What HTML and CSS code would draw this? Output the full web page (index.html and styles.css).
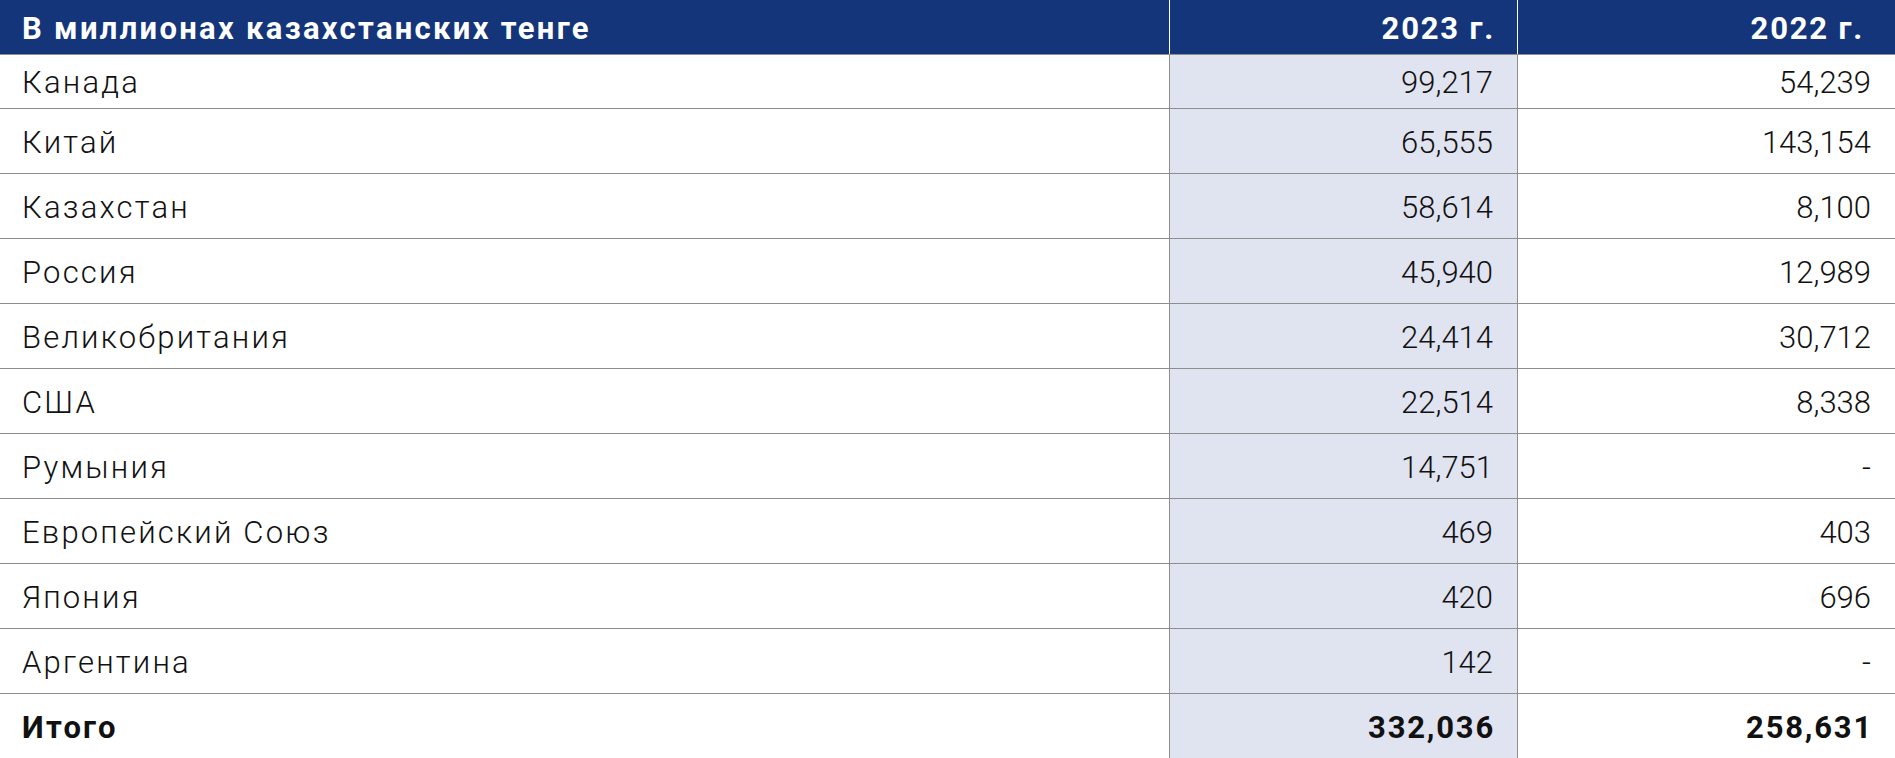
FILE: index.html
```html
<!DOCTYPE html>
<html lang="ru">
<head>
<meta charset="utf-8">
<title>В миллионах казахстанских тенге</title>
<link rel="stylesheet" href="styles.css">
</head>
<body>
<div class="table">
  <div class="row head">
    <div class="cell name">В миллионах казахстанских тенге</div>
    <div class="cell num cur">2023 г.</div>
    <div class="cell num prev">2022 г.</div>
  </div>
  <div class="row first">
    <div class="cell name">Канада</div>
    <div class="cell num cur">99,217</div>
    <div class="cell num prev">54,239</div>
  </div>
  <div class="row">
    <div class="cell name">Китай</div>
    <div class="cell num cur">65,555</div>
    <div class="cell num prev">143,154</div>
  </div>
  <div class="row">
    <div class="cell name">Казахстан</div>
    <div class="cell num cur">58,614</div>
    <div class="cell num prev">8,100</div>
  </div>
  <div class="row">
    <div class="cell name">Россия</div>
    <div class="cell num cur">45,940</div>
    <div class="cell num prev">12,989</div>
  </div>
  <div class="row">
    <div class="cell name">Великобритания</div>
    <div class="cell num cur">24,414</div>
    <div class="cell num prev">30,712</div>
  </div>
  <div class="row">
    <div class="cell name">США</div>
    <div class="cell num cur">22,514</div>
    <div class="cell num prev">8,338</div>
  </div>
  <div class="row">
    <div class="cell name">Румыния</div>
    <div class="cell num cur">14,751</div>
    <div class="cell num prev">-</div>
  </div>
  <div class="row">
    <div class="cell name">Европейский Союз</div>
    <div class="cell num cur">469</div>
    <div class="cell num prev">403</div>
  </div>
  <div class="row">
    <div class="cell name">Япония</div>
    <div class="cell num cur">420</div>
    <div class="cell num prev">696</div>
  </div>
  <div class="row">
    <div class="cell name">Аргентина</div>
    <div class="cell num cur">142</div>
    <div class="cell num prev">-</div>
  </div>
  <div class="row total">
    <div class="cell name">Итого</div>
    <div class="cell num cur">332,036</div>
    <div class="cell num prev">258,631</div>
  </div>
</div>
</body>
</html>
```

FILE: styles.css
```css
html, body {
  margin: 0;
  padding: 0;
  background: #ffffff;
}

body {
  font-family: Roboto, "Liberation Sans", sans-serif;
  color: #111111;
}

.table {
  width: 1895px;
}

.row {
  display: grid;
  grid-template-columns: 1169px 348px 1fr;
  height: 65px;
  box-sizing: border-box;
  border-bottom: 1px solid #8e8e8e;
  font-size: 31px;
  font-weight: 300;
}

.row.first {
  height: 54px;
}

.row.head {
  height: 55px;
  background: #14357a;
  color: #ffffff;
  font-weight: 700;
}

.row.total {
  font-weight: 700;
}

.cell {
  display: flex;
  align-items: center;
  padding-top: 2px;
  white-space: nowrap;
}

.name {
  padding-left: 22px;
  letter-spacing: 2.2px;
}

.head .name {
  letter-spacing: 2.3px;
}

.num {
  justify-content: flex-end;
  border-left: 1px solid #8e8e8e;
  padding-right: 24px;
}

.head .num,
.total .num {
  letter-spacing: 1.8px;
  padding-right: 22px;
}

.cur {
  background: #e0e3f0;
}

.head .num {
  border-left-color: #ffffff;
}

.head .cur {
  background: transparent;
}

.head .prev {
  padding-right: 31px;
}
```
